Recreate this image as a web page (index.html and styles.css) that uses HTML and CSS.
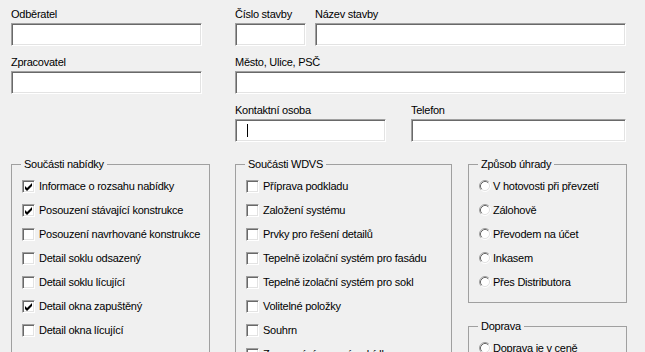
FILE: index.html
```
<!DOCTYPE html>
<html lang="cs">
<head>
    <meta charset="UTF-8">
    <title>Nabídka</title>
    <link rel="stylesheet" href="styles.css">
</head>
<body>
<div class="page">

    <div class="top">
        <div class="col col-left">
            <div class="field">
                <label>Odběratel</label>
                <div class="box"></div>
            </div>
            <div class="field">
                <label>Zpracovatel</label>
                <div class="box"></div>
            </div>
        </div>

        <div class="col col-right">
            <div class="row">
                <div class="field w-cislo">
                    <label>Číslo stavby</label>
                    <div class="box"></div>
                </div>
                <div class="field grow">
                    <label>Název stavby</label>
                    <div class="box"></div>
                </div>
            </div>
            <div class="field">
                <label>Město, Ulice, PSČ</label>
                <div class="box"></div>
            </div>
            <div class="row row-wide">
                <div class="field w-kontakt">
                    <label>Kontaktní osoba</label>
                    <div class="box"><span class="caret"></span></div>
                </div>
                <div class="field grow">
                    <label>Telefon</label>
                    <div class="box"></div>
                </div>
            </div>
        </div>
    </div>

    <div class="groups">
        <fieldset class="group g-nabidka">
            <legend>Součásti nabídky</legend>
            <div class="opt"><span class="check on"><svg viewBox="0 0 11 11"><polygon points="2,5 4,7 9,2 9,5 4,10 2,8"/></svg></span>Informace o rozsahu nabídky</div>
            <div class="opt"><span class="check on"><svg viewBox="0 0 11 11"><polygon points="2,5 4,7 9,2 9,5 4,10 2,8"/></svg></span>Posouzení stávající konstrukce</div>
            <div class="opt"><span class="check"></span>Posouzení navrhované konstrukce</div>
            <div class="opt"><span class="check"></span>Detail soklu odsazený</div>
            <div class="opt"><span class="check"></span>Detail soklu lícující</div>
            <div class="opt"><span class="check on"><svg viewBox="0 0 11 11"><polygon points="2,5 4,7 9,2 9,5 4,10 2,8"/></svg></span>Detail okna zapuštěný</div>
            <div class="opt"><span class="check"></span>Detail okna lícující</div>
        </fieldset>

        <fieldset class="group g-wdvs">
            <legend>Součásti WDVS</legend>
            <div class="opt"><span class="check"></span>Příprava podkladu</div>
            <div class="opt"><span class="check"></span>Založení systému</div>
            <div class="opt"><span class="check"></span>Prvky pro řešení detailů</div>
            <div class="opt"><span class="check"></span>Tepelně izolační systém pro fasádu</div>
            <div class="opt"><span class="check"></span>Tepelně izolační systém pro sokl</div>
            <div class="opt"><span class="check"></span>Volitelné položky</div>
            <div class="opt"><span class="check"></span>Souhrn</div>
            <div class="opt"><span class="check"></span>Zpracování cenové nabídky</div>
        </fieldset>

        <div class="stack">
            <fieldset class="group g-uhrada">
                <legend>Způsob úhrady</legend>
                <div class="opt"><svg class="radio" viewBox="0 0 12 12"><circle cx="6" cy="6" r="4.5" fill="#fff"/><path d="M2.11 9.89A5.5 5.5 0 0 1 9.89 2.11" stroke="#a0a0a0"/><path d="M9.89 2.11A5.5 5.5 0 0 1 2.11 9.89" stroke="#fff"/><path d="M2.82 9.18A4.5 4.5 0 0 1 9.18 2.82" stroke="#696969"/><path d="M9.18 2.82A4.5 4.5 0 0 1 2.82 9.18" stroke="#e3e3e3"/></svg>V hotovosti při převzetí</div>
                <div class="opt"><svg class="radio" viewBox="0 0 12 12"><circle cx="6" cy="6" r="4.5" fill="#fff"/><path d="M2.11 9.89A5.5 5.5 0 0 1 9.89 2.11" stroke="#a0a0a0"/><path d="M9.89 2.11A5.5 5.5 0 0 1 2.11 9.89" stroke="#fff"/><path d="M2.82 9.18A4.5 4.5 0 0 1 9.18 2.82" stroke="#696969"/><path d="M9.18 2.82A4.5 4.5 0 0 1 2.82 9.18" stroke="#e3e3e3"/></svg>Zálohově</div>
                <div class="opt"><svg class="radio" viewBox="0 0 12 12"><circle cx="6" cy="6" r="4.5" fill="#fff"/><path d="M2.11 9.89A5.5 5.5 0 0 1 9.89 2.11" stroke="#a0a0a0"/><path d="M9.89 2.11A5.5 5.5 0 0 1 2.11 9.89" stroke="#fff"/><path d="M2.82 9.18A4.5 4.5 0 0 1 9.18 2.82" stroke="#696969"/><path d="M9.18 2.82A4.5 4.5 0 0 1 2.82 9.18" stroke="#e3e3e3"/></svg>Převodem na účet</div>
                <div class="opt"><svg class="radio" viewBox="0 0 12 12"><circle cx="6" cy="6" r="4.5" fill="#fff"/><path d="M2.11 9.89A5.5 5.5 0 0 1 9.89 2.11" stroke="#a0a0a0"/><path d="M9.89 2.11A5.5 5.5 0 0 1 2.11 9.89" stroke="#fff"/><path d="M2.82 9.18A4.5 4.5 0 0 1 9.18 2.82" stroke="#696969"/><path d="M9.18 2.82A4.5 4.5 0 0 1 2.82 9.18" stroke="#e3e3e3"/></svg>Inkasem</div>
                <div class="opt"><svg class="radio" viewBox="0 0 12 12"><circle cx="6" cy="6" r="4.5" fill="#fff"/><path d="M2.11 9.89A5.5 5.5 0 0 1 9.89 2.11" stroke="#a0a0a0"/><path d="M9.89 2.11A5.5 5.5 0 0 1 2.11 9.89" stroke="#fff"/><path d="M2.82 9.18A4.5 4.5 0 0 1 9.18 2.82" stroke="#696969"/><path d="M9.18 2.82A4.5 4.5 0 0 1 2.82 9.18" stroke="#e3e3e3"/></svg>Přes Distributora</div>
            </fieldset>

            <fieldset class="group g-doprava">
                <legend>Doprava</legend>
                <div class="opt"><svg class="radio" viewBox="0 0 12 12"><circle cx="6" cy="6" r="4.5" fill="#fff"/><path d="M2.11 9.89A5.5 5.5 0 0 1 9.89 2.11" stroke="#a0a0a0"/><path d="M9.89 2.11A5.5 5.5 0 0 1 2.11 9.89" stroke="#fff"/><path d="M2.82 9.18A4.5 4.5 0 0 1 9.18 2.82" stroke="#696969"/><path d="M9.18 2.82A4.5 4.5 0 0 1 2.82 9.18" stroke="#e3e3e3"/></svg>Doprava je v ceně</div>
                <div class="opt"><svg class="radio" viewBox="0 0 12 12"><circle cx="6" cy="6" r="4.5" fill="#fff"/><path d="M2.11 9.89A5.5 5.5 0 0 1 9.89 2.11" stroke="#a0a0a0"/><path d="M9.89 2.11A5.5 5.5 0 0 1 2.11 9.89" stroke="#fff"/><path d="M2.82 9.18A4.5 4.5 0 0 1 9.18 2.82" stroke="#696969"/><path d="M9.18 2.82A4.5 4.5 0 0 1 2.82 9.18" stroke="#e3e3e3"/></svg>Doprava se účtuje</div>
            </fieldset>
        </div>
    </div>

</div>
</body>
</html>
```

FILE: styles.css
```
body {
    margin: 0;
    height: 352px;
    overflow: hidden;
    background-color: #f0f0f0;
    font-family: "Liberation Sans", Arial, sans-serif;
    font-size: 11px;
    letter-spacing: -0.25px;
    color: #000;
}

.page {
    padding: 8px 0 0 11px;
}

/* horni cast s textovymi poli */
.top {
    display: flex;
    gap: 33px;
}

.col {
    display: flex;
    flex-direction: column;
    gap: 10px;
}

.col-left {
    width: 191px;
}

.col-right {
    width: 391px;
}

.row {
    display: flex;
    gap: 9px;
}

.row-wide {
    gap: 25px;
}

.field {
    display: flex;
    flex-direction: column;
    gap: 2px;
}

.field label {
    line-height: 13px;
    height: 13px;
    white-space: nowrap;
}

.w-cislo {
    width: 71px;
}

.w-kontakt {
    width: 151px;
}

.grow {
    flex: 1;
}

/* pole ve stylu klasickych Windows */
.box {
    box-sizing: border-box;
    height: 23px;
    background-color: #fff;
    border: 1px solid;
    border-color: #a0a0a0 #fff #fff #a0a0a0;
    box-shadow: inset 1px 1px #696969, inset -1px -1px #e3e3e3;
    display: flex;
    align-items: center;
}

.caret {
    width: 1px;
    height: 13px;
    margin-left: 11px;
    background-color: #000;
}

/* skupiny */
.groups {
    display: flex;
    align-items: flex-start;
    margin-top: 16px;
}

.group {
    box-sizing: border-box;
    margin: 0;
    padding: 3px 0 8px 9px;
    border: 1px solid #a0a0a0;
    min-inline-size: 0;
}

.group legend {
    padding: 0 3px;
    line-height: 13px;
}

.g-nabidka {
    width: 199px;
    height: 240px;
    margin-right: 25px;
}

.g-wdvs {
    width: 217px;
    height: 240px;
    margin-right: 16px;
}

.stack {
    width: 159px;
    display: flex;
    flex-direction: column;
    gap: 17px;
}

.g-uhrada,
.g-doprava {
    width: 159px;
}

.opt {
    display: flex;
    align-items: center;
    height: 24px;
    gap: 4px;
    white-space: nowrap;
}

.check {
    box-sizing: border-box;
    flex: none;
    width: 13px;
    height: 13px;
    margin-left: 1px;
    background-color: #fff;
    border: 1px solid;
    border-color: #a0a0a0 #fff #fff #a0a0a0;
    box-shadow: inset 1px 1px #696969, inset -1px -1px #e3e3e3;
}

.check svg {
    display: block;
    width: 11px;
    height: 11px;
    fill: #000;
}

.radio {
    flex: none;
    width: 12px;
    height: 12px;
    margin-left: 1px;
    margin-right: -2px;
    fill: none;
}
```
